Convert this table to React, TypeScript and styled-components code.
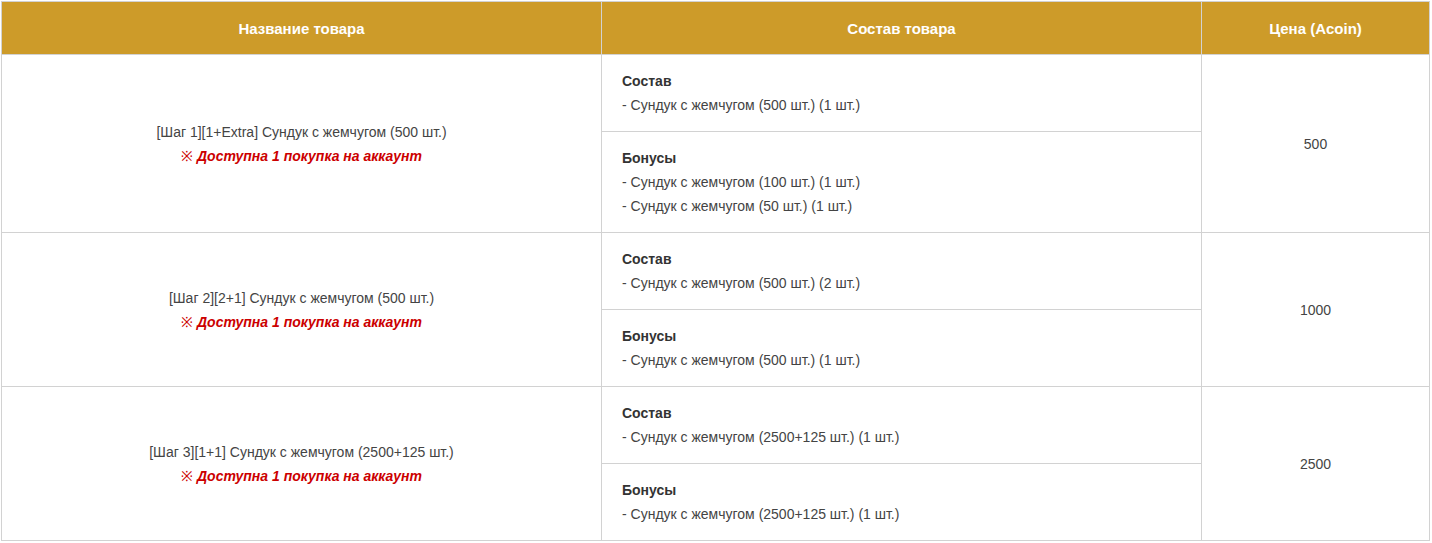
import React from "react";
import styled, { createGlobalStyle } from "styled-components";

const Global = createGlobalStyle`
  html, body { margin: 0; padding: 0; background: #fff; }
  body { font-family: "Liberation Sans", Arial, sans-serif; }
`;

const Wrap = styled.div`
  padding: 1px 3px 0 1px;
`;

const Table = styled.table`
  width: 1428px;
  border-collapse: collapse;
  table-layout: fixed;
  font-family: "Liberation Sans", Arial, sans-serif;
  font-size: 14px;
  color: #444;
`;

const HeadCell = styled.th`
  background: #cd9b29;
  color: #fff;
  font-weight: bold;
  font-size: 15px;
  height: 52px;
  padding: 0;
  border: 1px solid #d2d2d2;
  text-align: center;
  vertical-align: middle;
`;

const Cell = styled.td<{ $center?: boolean }>`
  border: 1px solid #d2d2d2;
  padding: 14px 20px;
  line-height: 24px;
  vertical-align: middle;
  text-align: ${(p) => (p.$center ? "center" : "left")};
`;

const Line = styled.div``;

const Title = styled.div`
  font-weight: bold;
  color: #333;
`;

const Notice = styled.div`
  color: #c00;
  font-weight: bold;
  font-style: italic;
`;

const Mark = styled.span`
  font-weight: normal;
  font-style: normal;
`;

type Row = {
  name: string;
  content: string[];
  bonus: string[];
  price: string;
};

const rows: Row[] = [
  {
    name: "[Шаг 1][1+Extra] Сундук с жемчугом (500 шт.)",
    content: ["- Сундук с жемчугом (500 шт.) (1 шт.)"],
    bonus: [
      "- Сундук с жемчугом (100 шт.) (1 шт.)",
      "- Сундук с жемчугом (50 шт.) (1 шт.)",
    ],
    price: "500",
  },
  {
    name: "[Шаг 2][2+1] Сундук с жемчугом (500 шт.)",
    content: ["- Сундук с жемчугом (500 шт.) (2 шт.)"],
    bonus: ["- Сундук с жемчугом (500 шт.) (1 шт.)"],
    price: "1000",
  },
  {
    name: "[Шаг 3][1+1] Сундук с жемчугом (2500+125 шт.)",
    content: ["- Сундук с жемчугом (2500+125 шт.) (1 шт.)"],
    bonus: ["- Сундук с жемчугом (2500+125 шт.) (1 шт.)"],
    price: "2500",
  },
];

export default function App() {
  return (
    <>
      <Global />
      <Wrap>
        <Table>
          <colgroup>
            <col style={{ width: 600 }} />
            <col style={{ width: 600 }} />
            <col style={{ width: 228 }} />
          </colgroup>
          <thead>
            <tr>
              <HeadCell>Название товара</HeadCell>
              <HeadCell>Состав товара</HeadCell>
              <HeadCell>Цена (Acoin)</HeadCell>
            </tr>
          </thead>
          <tbody>
            {rows.map((r) => (
              <React.Fragment key={r.name}>
                <tr>
                  <Cell $center rowSpan={2}>
                    <Line>{r.name}</Line>
                    <Notice>
                      <Mark>※</Mark> Доступна 1 покупка на аккаунт
                    </Notice>
                  </Cell>
                  <Cell>
                    <Title>Состав</Title>
                    {r.content.map((c, i) => (
                      <Line key={i}>{c}</Line>
                    ))}
                  </Cell>
                  <Cell $center rowSpan={2}>
                    {r.price}
                  </Cell>
                </tr>
                <tr>
                  <Cell>
                    <Title>Бонусы</Title>
                    {r.bonus.map((c, i) => (
                      <Line key={i}>{c}</Line>
                    ))}
                  </Cell>
                </tr>
              </React.Fragment>
            ))}
          </tbody>
        </Table>
      </Wrap>
    </>
  );
}
